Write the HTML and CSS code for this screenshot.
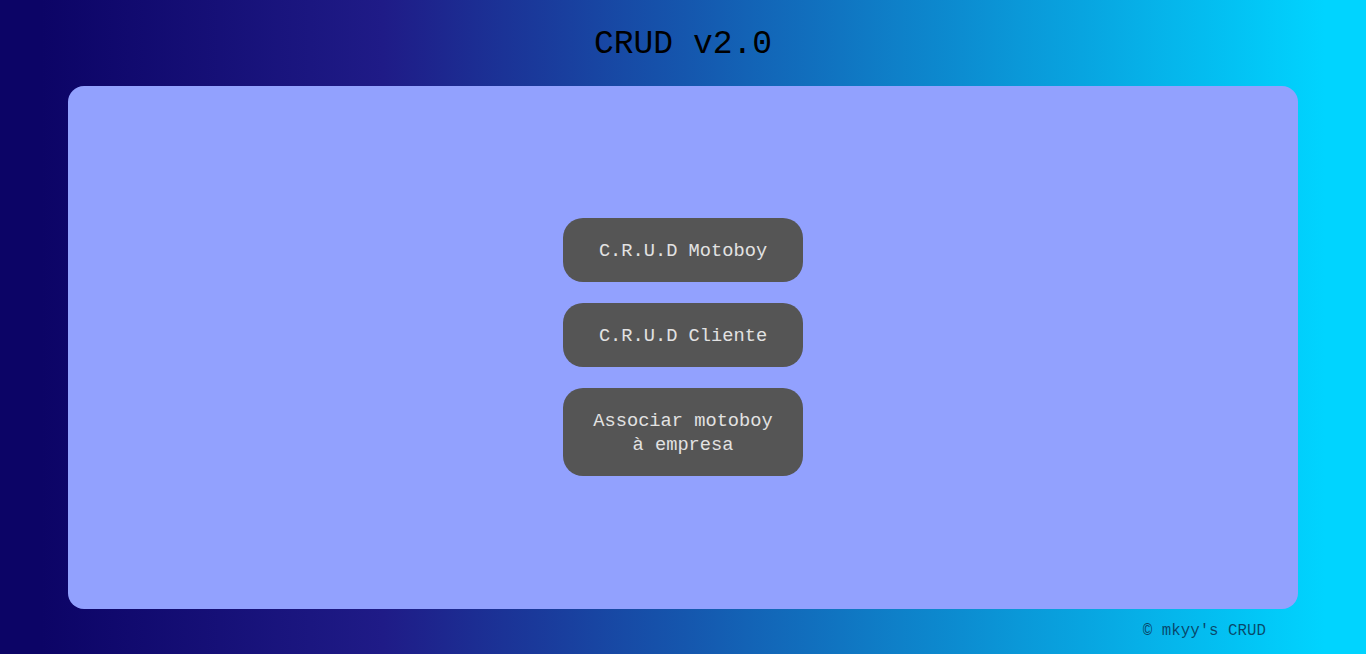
FILE: index.html
```html
<!DOCTYPE html>
<html lang="pt">
<head>
<meta charset="utf-8">
<title>CRUD v2.0</title>
<link rel="stylesheet" href="styles.css">
</head>
<body>
<header class="top">
  <h1 class="title">CRUD v2.0</h1>
</header>
<main class="card">
  <nav class="menu">
    <a class="btn" href="#">C.R.U.D Motoboy</a>
    <a class="btn" href="#">C.R.U.D Cliente</a>
    <a class="btn" href="#">Associar motoboy<br>à empresa</a>
  </nav>
</main>
<footer class="foot">© mkyy's CRUD</footer>
</body>
</html>
```
FILE: styles.css
```css
html, body {
  margin: 0;
  padding: 0;
  height: 100%;
}
body {
  height: 654px;
  display: flex;
  flex-direction: column;
  font-family: "Liberation Mono", "DejaVu Sans Mono", monospace;
  background: linear-gradient(90deg, #0c0466 3%, #1f1b87 28%, #00d4ff 97%);
  overflow: hidden;
}
.top {
  height: 86px;
  display: flex;
  align-items: center;
  justify-content: center;
}
.title {
  margin: 0;
  font-size: 33px;
  font-weight: 300;
  color: #000;
  padding-top: 2px;
}
.card {
  flex: 1;
  margin: 0 68px;
  background: #92a1fe;
  border-radius: 16px;
  display: flex;
  align-items: center;
  justify-content: center;
}
.menu {
  display: flex;
  flex-direction: column;
  gap: 21px;
  margin-top: -1px;
}
.btn {
  box-sizing: border-box;
  width: 240px;
  min-height: 64px;
  padding: 21px 10px 19px;
  border-radius: 20px;
  background: #555555;
  color: #e2e2e2;
  text-decoration: none;
  font-size: 18.7px;
  line-height: 24px;
  text-align: center;
  display: flex;
  align-items: center;
  justify-content: center;
}
.foot {
  height: 45px;
  box-sizing: border-box;
  padding: 13px 100px 0 0;
  text-align: right;
  font-size: 15.8px;
  color: rgba(10, 30, 60, 0.75);
}
```
